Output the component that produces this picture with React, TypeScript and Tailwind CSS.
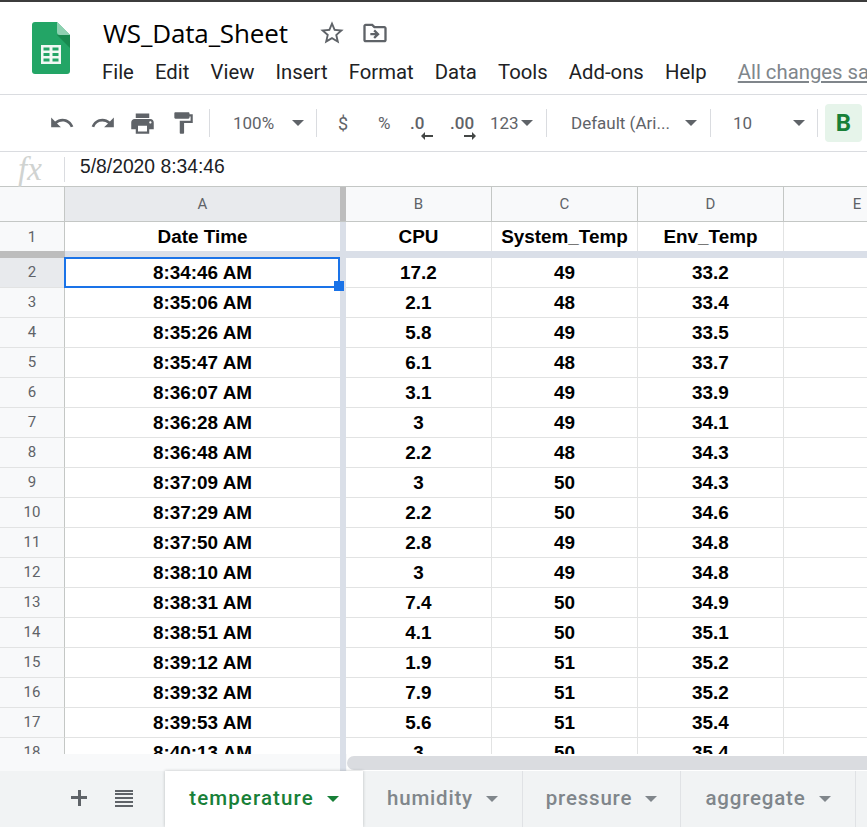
import { MdFormatPaint, MdOutlineDriveFileMove, MdPrint, MdRedo, MdStarBorder, MdUndo } from 'react-icons/md';

const rows = [
  ['8:34:46 AM', '17.2', '49', '33.2'],
  ['8:35:06 AM', '2.1', '48', '33.4'],
  ['8:35:26 AM', '5.8', '49', '33.5'],
  ['8:35:47 AM', '6.1', '48', '33.7'],
  ['8:36:07 AM', '3.1', '49', '33.9'],
  ['8:36:28 AM', '3', '49', '34.1'],
  ['8:36:48 AM', '2.2', '48', '34.3'],
  ['8:37:09 AM', '3', '50', '34.3'],
  ['8:37:29 AM', '2.2', '50', '34.6'],
  ['8:37:50 AM', '2.8', '49', '34.8'],
  ['8:38:10 AM', '3', '49', '34.8'],
  ['8:38:31 AM', '7.4', '50', '34.9'],
  ['8:38:51 AM', '4.1', '50', '35.1'],
  ['8:39:12 AM', '1.9', '51', '35.2'],
  ['8:39:32 AM', '7.9', '51', '35.2'],
  ['8:39:53 AM', '5.6', '51', '35.4'],
  ['8:40:13 AM', '3', '50', '35.4'],
];

const menus = ['File', 'Edit', 'View', 'Insert', 'Format', 'Data', 'Tools', 'Add-ons', 'Help'];

function Caret({ className = 'border-t-[#5f6368]' }: { className?: string }) {
  return <span className={`inline-block w-0 h-0 border-x-[6px] border-x-transparent border-t-[6px] ${className}`} />;
}

function Sep() {
  return <div className="w-px h-7 bg-[#dadce0] shrink-0" />;
}

function SheetsLogo() {
  return (
    <svg width="38" height="52" viewBox="0 0 38 52" className="shrink-0">
      <path d="M3 0h22l13 13v36a3 3 0 0 1-3 3H3a3 3 0 0 1-3-3V3a3 3 0 0 1 3-3z" fill="#23a566" />
      <path d="M25 13l13 13V13z" fill="#188a4f" />
      <path d="M25 0l13 13H28a3 3 0 0 1-3-3z" fill="#8ed1b1" />
      <path d="M9 23h20v19H9z M11.500 25.500v3h6v-3z M20.500 25.500v3h6v-3z M11.500 31v3h6v-3z M20.500 31v3h6v-3z M11.500 36.500v3h6v-3z M20.500 36.500v3h6v-3z" fill="#f1f8f4" fillRule="evenodd" />
    </svg>
  );
}

function Arrow({ left }: { left?: boolean }) {
  return (
    <svg width="12" height="8" viewBox="0 0 12 8" className={`absolute -bottom-[4px] ${left ? '-right-[7px]' : '-right-[2px]'}`}>
      <path d={left ? 'M12 3H4V0L0 4l4 4V5h8z' : 'M0 3h8V0l4 4-4 4V5H0z'} fill="#444746" />
    </svg>
  );
}

function Row({ num, cells, bold }: { num: number; cells: string[]; bold?: boolean }) {
  return (
    <div className="flex h-[30px] shrink-0">
      <div className={`w-[65px] shrink-0 border-r border-r-[#c4c7c5] flex items-center justify-center text-[15px] font-normal font-['Roboto',sans-serif] text-[#5f6368] ${num === 2 ? 'bg-[#e8eaed]' : 'bg-[#f8f9fa]'} ${bold ? '' : 'border-b border-b-[#e2e3e3]'}`}>
        {num}
      </div>
      <div className={`w-[275px] shrink-0 flex items-center justify-center pt-[1px] ${bold ? '' : 'border-b border-b-[#e2e3e3]'}`}>{cells[0]}</div>
      <div className="w-[6px] shrink-0 bg-[#dadfe8]" />
      {cells.slice(1).map((c, i) => (
        <div key={i} className={`w-[146px] shrink-0 flex items-center justify-center pt-[1px] border-r border-r-[#e2e3e3] ${bold ? '' : 'border-b border-b-[#e2e3e3]'}`}>
          {c}
        </div>
      ))}
      <div className={`flex-1 ${bold ? '' : 'border-b border-b-[#e2e3e3]'}`} />
    </div>
  );
}

function Tab({ label, width }: { label: string; width: string }) {
  return (
    <div className={`${width} shrink-0 flex items-center justify-center gap-[13px] border-r border-r-[#e0e2e5] text-[20.500px] font-medium text-[#80868b] tracking-[0.8px]`}>
      <span className="-mt-[1px]">{label}</span>
      <Caret className="border-t-[#80868b]" />
    </div>
  );
}

export default function App() {
  return (
    <div className="w-[867px] h-[827px] overflow-hidden bg-white flex flex-col font-['Roboto',sans-serif]">
      <div className="h-[2px] bg-[#3c3c3c] shrink-0" />

      <header className="h-[92px] shrink-0 flex border-b border-b-[#dadce0] box-content">
        <div className="w-[102px] shrink-0 pl-[32px] pt-[20px]">
          <SheetsLogo />
        </div>
        <div className="flex-1 min-w-0 pt-[13px] overflow-hidden">
          <div className="flex items-center h-[36px]">
            <span className="ml-[1px] text-[26px] leading-none text-black font-['Open_Sans',sans-serif] tracking-[-0.15px]">WS_Data_Sheet</span>
            <MdStarBorder className="ml-[30px] text-[#5f6368]" size={28} />
            <MdOutlineDriveFileMove className="ml-[15px] text-[#5f6368]" size={28} />
          </div>
          <nav className="flex items-center mt-[6px] text-[20.300px] text-[#202124] whitespace-nowrap">
            {menus.map((m) => (
              <span key={m} className="mr-[21.200px]">{m}</span>
            ))}
            <span className="ml-[10px] text-[#80868b] underline underline-offset-2">All changes saved in Drive</span>
          </nav>
        </div>
      </header>

      <div className="h-[56px] shrink-0 flex items-center border-b border-b-[#dadce0] box-content text-[#5f6368] text-[17px] whitespace-nowrap">
        <div className="w-[49px] shrink-0" />
        <MdUndo size={26} className="shrink-0" />
        <MdRedo size={26} className="ml-[15px] shrink-0" />
        <MdPrint size={27} className="ml-[13px] shrink-0" />
        <MdFormatPaint size={26} className="ml-[14px] shrink-0" />
        <div className="w-[13px] shrink-0" />
        <Sep />
        <span className="ml-[23px] w-[59px] shrink-0 pt-[1px]">100%</span>
        <Caret />
        <div className="w-[12px] shrink-0" />
        <Sep />
        <span className="ml-[21px] w-[34px] shrink-0 text-[18px] pt-[1px]">$</span>
        <span className="ml-[6px] w-[32px] shrink-0 text-[17px] pt-[1px]">%</span>
        <span className="relative w-[16px] shrink-0 font-medium pt-[1px]">.0<Arrow left /></span>
        <span className="relative ml-[24px] w-[24px] shrink-0 font-medium pt-[1px]">.00<Arrow /></span>
        <span className="ml-[16px] w-[31px] shrink-0 pt-[1px]">123</span>
        <Caret />
        <div className="w-[13px] shrink-0" />
        <Sep />
        <span className="ml-[24px] w-[114px] shrink-0 text-[17px] pt-[1px]">Default (Ari...</span>
        <Caret />
        <div className="w-[13px] shrink-0" />
        <Sep />
        <span className="ml-[22px] w-[60px] shrink-0 pt-[1px]">10</span>
        <Caret />
        <div className="w-[12px] shrink-0" />
        <Sep />
        <div className="ml-[7px] w-[37px] h-[38px] rounded bg-[#e6f4ea] text-[#188038] text-[24px] font-bold flex items-center justify-center shrink-0">B</div>
      </div>

      <div className="h-[34px] shrink-0 flex items-center border-b border-b-[#c4c7c5] box-content">
        <div className="w-[64px] shrink-0 flex justify-center pr-[4px] text-[33px] leading-none italic text-[#d0d3d1] font-['Liberation_Serif',serif]">fx</div>
        <div className="w-px h-[25px] bg-[#dadce0]" />
        <div className="ml-[15px] -mt-[3px] text-[19.300px] text-[#202124] font-['Liberation_Sans',sans-serif]">5/8/2020 8:34:46</div>
      </div>

      <div className="h-[34px] shrink-0 flex border-b border-b-[#c4c7c5] box-content text-[15px] text-[#5f6368] overflow-hidden">
        <div className="w-[65px] shrink-0 bg-[#f8f9fa] border-r border-r-[#c4c7c5]" />
        <div className="w-[275px] shrink-0 bg-[#e8eaed] flex items-center justify-center">A</div>
        <div className="w-[6px] shrink-0 bg-[#bdbdbd]" />
        {['B', 'C', 'D'].map((c) => (
          <div key={c} className="w-[146px] shrink-0 bg-[#f8f9fa] border-r border-r-[#c4c7c5] flex items-center justify-center">{c}</div>
        ))}
        <div className="w-[146px] shrink-0 bg-[#f8f9fa] flex items-center justify-center">E</div>
      </div>

      <div className="relative h-[532px] shrink-0 overflow-hidden flex flex-col text-[18.900px] font-bold text-black font-['Liberation_Sans',sans-serif]">
        <div className="h-[29px] shrink-0 overflow-hidden flex flex-col justify-start">
          <Row num={1} cells={['Date Time', 'CPU', 'System_Temp', 'Env_Temp']} bold />
        </div>
        <div className="h-[7px] shrink-0 flex">
          <div className="w-[65px] bg-[#bdbdbd]" />
          <div className="flex-1 bg-[#dadfe8]" />
        </div>
        {rows.map((r, i) => (
          <Row key={i} num={i + 2} cells={r} />
        ))}
        <div className="absolute left-[64px] top-[35px] w-[276px] h-[31px] border-2 border-[#1a73e8]" />
        <div className="absolute left-[334px] top-[59px] w-[10px] h-[10px] bg-[#1a73e8]" />
      </div>

      <div className="h-[17px] shrink-0 flex bg-[#f8f9fa]">
        <div className="w-[340px] shrink-0" />
        <div className="w-[6px] shrink-0 bg-[#dadfe8]" />
        <div className="flex-1 ml-px bg-white flex items-center">
          <div className="w-full h-[14px] rounded-l-[7px] bg-[#dadce0]" />
        </div>
      </div>

      <div className="h-[56px] shrink-0 flex bg-[#f1f3f4] text-[#5f6368]">
        <div className="w-[165px] shrink-0 flex items-center">
          <span className="ml-[71px] w-[16px] h-[16px] relative -mt-[2px]">
            <span className="absolute left-[7px] top-0 w-[3px] h-[16px] bg-[#5f6368]" />
            <span className="absolute left-0 top-[6px] w-[16px] h-[3px] bg-[#5f6368]" />
          </span>
          <span className="ml-[28px] w-[18px] h-[17px] -mt-[2px] flex flex-col justify-between">
            <span className="h-[2px] bg-[#5f6368]" />
            <span className="h-[2px] bg-[#5f6368]" />
            <span className="h-[2px] bg-[#5f6368]" />
            <span className="h-[2px] bg-[#5f6368]" />
            <span className="h-[2px] bg-[#5f6368]" />
          </span>
        </div>
        <div className="w-[198px] shrink-0 bg-white flex items-center justify-center gap-[13px] text-[20.500px] font-medium text-[#188038] tracking-[1.100px] shadow-[0_0_3px_rgba(60,64,67,0.3)]">
          <span className="-mt-[1px]">temperature</span>
          <Caret className="border-t-[#188038]" />
        </div>
        <Tab label="humidity" width="w-[160px]" />
        <Tab label="pressure" width="w-[158px]" />
        <Tab label="aggregate" width="w-[175px]" />
      </div>
      <div className="h-[2px] bg-[#0b3d5c] shrink-0" />
    </div>
  );
}
